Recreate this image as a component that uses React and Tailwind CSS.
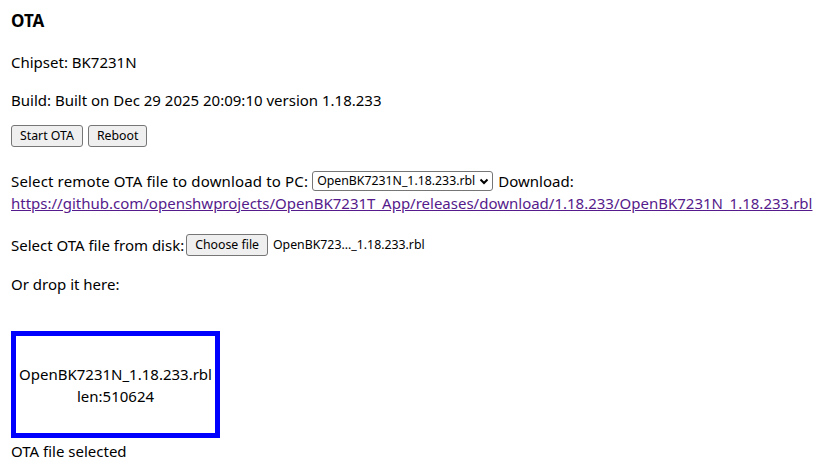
export default function App() {
  const font = { fontFamily: '"Noto Sans", "Open Sans", sans-serif' }
  const btn =
    'h-[22px] rounded-[3px] border border-[#767676] bg-[#efefef] px-[8px] text-[12.3px] leading-none text-black'

  return (
    <div className="flex min-h-[474px] flex-col bg-white pl-[11px] text-[15px] leading-[22px] text-black" style={font}>
      <h3 className="mt-[10px] text-[17px] font-bold leading-[22px]">OTA</h3>
      <p className="mt-[19px]">Chipset: BK7231N</p>
      <p className="mt-[16px]">Build: Built on Dec 29 2025 20:09:10 version 1.18.233</p>

      <div className="mt-[14px] flex gap-[5px]">
        <button className={btn}>Start OTA</button>
        <button className={btn}>Reboot</button>
      </div>

      <div className="mt-[23px]">
        <div className="flex items-center">
          <span className="tracking-[0.15px]">Select remote OTA file to download to PC:</span>
          <span className="ml-[4px] inline-flex h-[20px] items-center gap-[3px] rounded-[3px] border border-[#767676] bg-white pl-[4px] pr-[2px] text-[12.3px]">
            OpenBK7231N_1.18.233.rbl
            <svg width="12" height="12" viewBox="0 0 12 12" fill="none" stroke="black" strokeWidth="2">
              <path d="M2.5 4.5 6 8l3.5-3.5" />
            </svg>
          </span>
          <span className="ml-[5px]">Download:</span>
        </div>
        <a href="#" className="block whitespace-nowrap text-[#551a8b] underline">
          https://github.com/openshwprojects/OpenBK7231T_App/releases/download/1.18.233/OpenBK7231N_1.18.233.rbl
        </a>
      </div>

      <div className="mt-[20px] flex items-center">
        <span>Select OTA file from disk:</span>
        <button className={btn + ' ml-[2px]'}>Choose file</button>
        <span className="ml-[5px] text-[12.3px]">OpenBK723..._1.18.233.rbl</span>
      </div>

      <p className="mt-[17px]">Or drop it here:</p>

      <div className="mt-[36px] flex h-[107px] w-[209px] flex-col items-center justify-center border-[5px] border-[#0000ff] text-center">
        <span>OpenBK7231N_1.18.233.rbl</span>
        <span>len:510624</span>
      </div>
      <p className="mt-[2px]">OTA file selected</p>
    </div>
  )
}
